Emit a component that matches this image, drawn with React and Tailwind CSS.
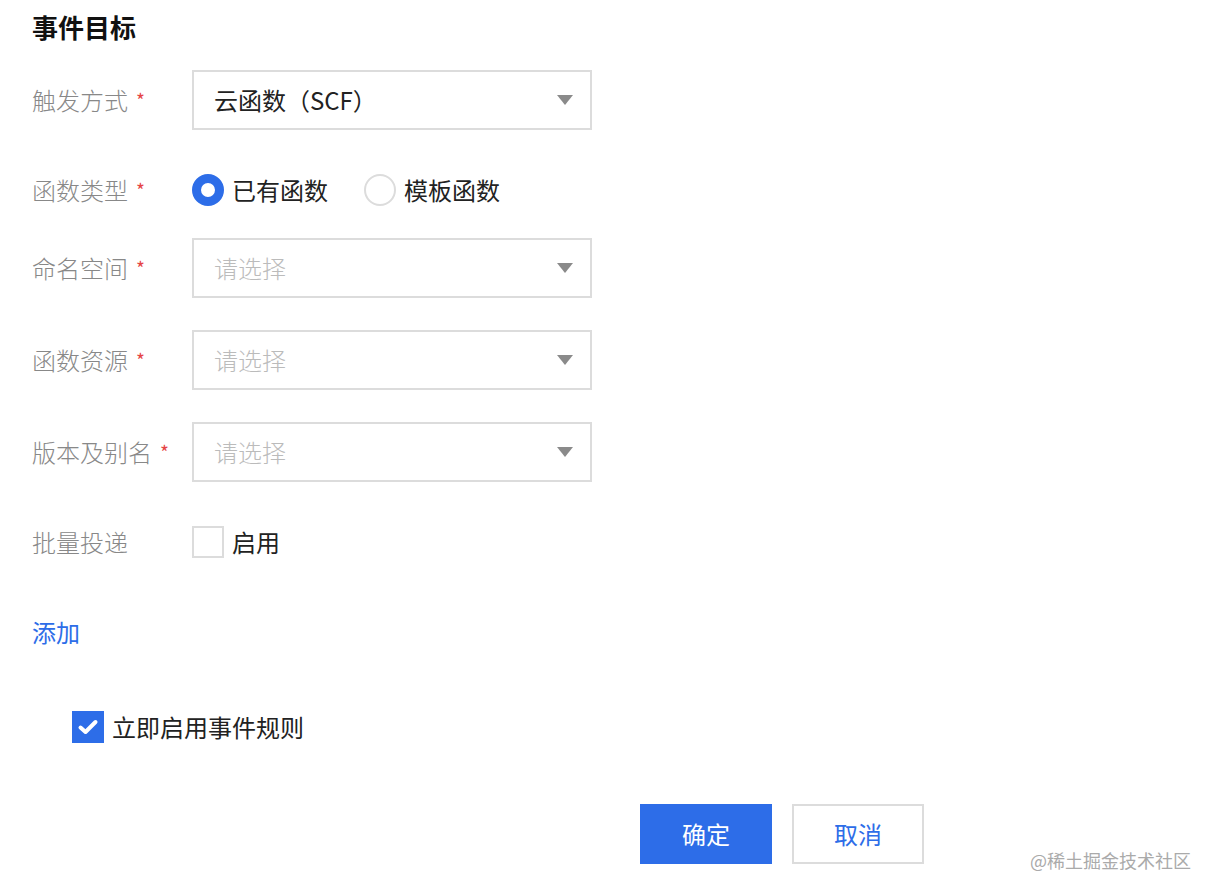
import React from "react";

const font = { fontFamily: '"PingFang SC", "Noto Sans CJK SC", "Liberation Sans", sans-serif' };

function Caret() {
  return (
    <svg width="16" height="10" viewBox="0 0 16 10" className="shrink-0">
      <path d="M0 0 H16 L8 10 Z" fill="#8a8a8a" />
    </svg>
  );
}

function Label({ text, required = true }) {
  return (
    <div className="w-[160px] shrink-0 flex items-center text-[24px] font-light text-[#888888]">
      <span>{text}</span>
      {required && <span className="ml-[8px] text-[19px] font-normal text-[#e54545]">*</span>}
    </div>
  );
}

function Select({ value, placeholder }) {
  return (
    <div className="w-[400px] h-[60px] border-2 border-[#dcdcdc] bg-white flex items-center justify-between pl-[20px] pr-[17px]">
      {value ? (
        <span className="text-[24px] text-[#222]">{value}</span>
      ) : (
        <span className="text-[24px] font-light text-[#bbbbbb]">{placeholder}</span>
      )}
      <Caret />
    </div>
  );
}

function Radio({ checked, label }) {
  return (
    <div className="flex items-center gap-[8px]">
      {checked ? (
        <span className="w-[32px] h-[32px] rounded-full border-[9px] border-[#2d6de8] bg-white" />
      ) : (
        <span className="w-[32px] h-[32px] rounded-full border-2 border-[#dcdcdc] bg-white" />
      )}
      <span className="text-[24px] text-[#222]">{label}</span>
    </div>
  );
}

export default function App() {
  return (
    <div className="min-h-screen bg-white relative" style={font}>
      <div className="pl-[32px] pt-[10px]">
        <h1 className="text-[26px] font-bold text-[#111] leading-[34px]">事件目标</h1>

        <div className="mt-[26px] flex items-center">
          <Label text="触发方式" />
          <Select value="云函数（SCF）" />
        </div>

        <div className="mt-[30px] h-[60px] flex items-center">
          <Label text="函数类型" />
          <div className="flex items-center gap-[36px]">
            <Radio checked label="已有函数" />
            <Radio label="模板函数" />
          </div>
        </div>

        <div className="mt-[18px] flex items-center">
          <Label text="命名空间" />
          <Select placeholder="请选择" />
        </div>

        <div className="mt-[32px] flex items-center">
          <Label text="函数资源" />
          <Select placeholder="请选择" />
        </div>

        <div className="mt-[32px] flex items-center">
          <Label text="版本及别名" />
          <Select placeholder="请选择" />
        </div>

        <div className="mt-[42px] flex items-center">
          <Label text="批量投递" required={false} />
          <div className="flex items-center gap-[8px]">
            <span className="w-[32px] h-[32px] border-2 border-[#dcdcdc] bg-white" />
            <span className="text-[24px] text-[#222]">启用</span>
          </div>
        </div>

        <div className="mt-[54px]">
          <a className="text-[24px] text-[#2d6de8]">添加</a>
        </div>

        <div className="mt-[59px] pl-[40px] flex items-center gap-[8px]">
          <span className="w-[32px] h-[32px] bg-[#2d6de8] flex items-center justify-center">
            <svg width="22" height="18" viewBox="0 0 22 18">
              <path d="M3.5 9.5 L8.5 14 L18.5 4" fill="none" stroke="white" strokeWidth="4" strokeLinecap="round" strokeLinejoin="round" />
            </svg>
          </span>
          <span className="text-[24px] text-[#222]">立即启用事件规则</span>
        </div>

        <div className="mt-[59px] pl-[608px] flex items-center gap-[20px]">
          <button className="w-[132px] h-[60px] bg-[#2d6de8] text-white text-[24px]">确定</button>
          <button className="w-[132px] h-[60px] border-2 border-[#dcdcdc] bg-white text-[#2d6de8] text-[24px]">取消</button>
        </div>
      </div>
      <div className="absolute left-[1030px] top-[847px] text-[18px] text-[#aaaaaa]">@稀土掘金技术社区</div>
    </div>
  );
}
